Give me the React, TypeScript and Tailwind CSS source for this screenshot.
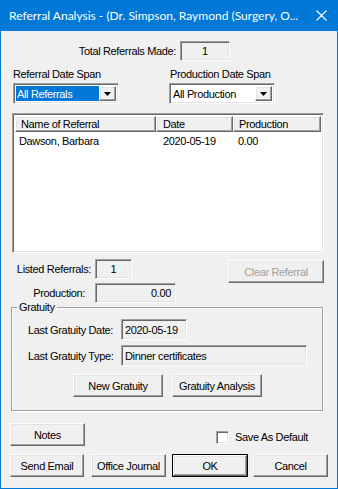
import React from "react";

const raised =
  "bg-[#f0f0f0] border border-t-white border-l-white border-r-[#696969] border-b-[#696969] shadow-[inset_-1px_-1px_0_#a0a0a0,inset_1px_1px_0_#e3e3e3]";
const sunken =
  "border border-t-[#a0a0a0] border-l-[#a0a0a0] border-r-white border-b-white shadow-[inset_1px_1px_0_#696969,inset_-1px_-1px_0_#e3e3e3]";

function Field({ className, children }: { className: string; children?: React.ReactNode }) {
  return <div className={`${sunken} bg-[#f0f0f0] flex items-center ${className}`}>{children}</div>;
}

function Button({ className, children, disabled }: { className: string; children: React.ReactNode; disabled?: boolean }) {
  return (
    <div className={`${raised} flex items-center justify-center h-[23px] ${disabled ? "text-[#a0a0a0]" : ""} ${className}`}>
      {children}
    </div>
  );
}

function Combo({ text, selected }: { text: string; selected?: boolean }) {
  return (
    <div className={`${sunken} bg-white flex items-center p-[2px] w-[106px] h-[21px]`}>
      <div className={`flex-1 h-full flex items-center pl-[1px] ${selected ? "bg-[#0078d7] text-white" : ""}`}>{text}</div>
      <div className={`${raised} w-[17px] h-full flex items-center justify-center`}>
        <svg width="7" height="4" viewBox="0 0 7 4">
          <path d="M0 0h7L3.5 4z" fill="black" />
        </svg>
      </div>
    </div>
  );
}

export default function App() {
  return (
    <div className="w-[338px] h-[489px] flex flex-col bg-[#0078d7] font-['Liberation_Sans',Arial,sans-serif] text-[11px] leading-[14px] tracking-[-0.35px] text-black">
      <div className="h-[31px] flex items-center pl-[9px] pr-[10px] text-white font-['Lato',sans-serif] text-[12px] tracking-normal">
        <span className="flex-1 whitespace-nowrap">Referral Analysis - (Dr. Simpson, Raymond (Surgery, O...</span>
        <svg width="11" height="11" viewBox="0 0 11 11" className="mr-[1px] shrink-0">
          <path d="M0.5 0.5l10 10M10.5 0.5l-10 10" stroke="white" strokeWidth="1.1" />
        </svg>
      </div>

      <div className="flex-1 bg-[#f0f0f0] mx-px mb-px flex flex-col">
        <div className="mt-[10px] flex items-center h-[20px]">
          <span className="w-[179px] text-right pr-[4px]">Total Referrals Made:</span>
          <Field className="w-[50px] h-[20px] justify-center">1</Field>
        </div>

        <div className="mt-[6px] flex pl-[12px] h-[14px]">
          <span className="w-[156px]">Referral Date Span</span>
          <span className="pl-[1px]">Production Date Span</span>
        </div>

        <div className="mt-[2px] flex pl-[12px]">
          <Combo text="All Referrals" selected />
          <div className="ml-[50px]">
            <Combo text="All Production" />
          </div>
        </div>

        <div className={`${sunken} mt-[9px] ml-[11px] w-[312px] h-[140px] bg-white p-[2px] flex flex-col`}>
          <div className="flex h-[16px]">
            <div className={`${raised} w-[141px] pl-[5px] flex items-center`}>Name of Referral</div>
            <div className={`${raised} w-[77px] pl-[6px] flex items-center`}>Date</div>
            <div className={`${raised} w-[88px] pl-[5px] flex items-center`}>Production</div>
          </div>
          <div className="flex h-[16px] items-center mt-[1px]">
            <span className="w-[141px] pl-[4px]">Dawson, Barbara</span>
            <span className="w-[77px] pl-[7px]">2020-05-19</span>
            <span className="pl-[5px]">0.00</span>
          </div>
        </div>

        <div className="mt-[6px] flex items-start h-[24px]">
          <span className="w-[94px] pr-[4px] text-right leading-[20px]">Listed Referrals:</span>
          <Field className="w-[37px] h-[20px] justify-center">1</Field>
          <Button className="ml-[96px] mt-[1px] w-[96px]" disabled>
            Clear Referral
          </Button>
        </div>

        <div className="flex items-center h-[20px]">
          <span className="w-[94px] pr-[10px] text-right">Production:</span>
          <Field className="w-[81px] h-[20px] justify-end pr-[4px]">0.00</Field>
        </div>

        <div className="relative mt-[4px] ml-[10px] w-[312px] h-[104px] border border-[#a0a0a0] shadow-[inset_1px_1px_0_white,1px_1px_0_white] pl-[16px] flex flex-col">
          <span className="absolute top-[-8px] left-[5px] px-[2px] bg-[#f0f0f0]">Gratuity</span>
          <div className="mt-[11px] flex items-center h-[21px]">
            <span className="w-[93px]">Last Gratuity Date:</span>
            <Field className="w-[66px] h-[21px] pl-[3px]">2020-05-19</Field>
          </div>
          <div className="mt-[5px] flex items-center h-[21px]">
            <span className="w-[93px]">Last Gratuity Type:</span>
            <Field className="w-[186px] h-[21px] pl-[3px]">Dinner certificates</Field>
          </div>
          <div className="mt-[8px] flex ml-[45px] gap-[9px]">
            <Button className="w-[90px]">New Gratuity</Button>
            <Button className="w-[90px]">Gratuity Analysis</Button>
          </div>
        </div>

        <div className="mt-[12px] flex items-start h-[23px]">
          <Button className="ml-[9px] w-[75px]">Notes</Button>
          <div className="ml-[131px] mt-[7px] flex items-center">
            <div className={`${sunken} bg-white w-[13px] h-[13px]`} />
            <span className="ml-[6px]">Save As Default</span>
          </div>
        </div>

        <div className="mt-[8px] flex">
          <Button className="ml-[9px] w-[74px]">Send Email</Button>
          <Button className="ml-[7px] w-[75px]">Office Journal</Button>
          <div className="ml-[6px] w-[76px] h-[23px] border border-black flex">
            <div className={`${raised} flex-1 flex items-center justify-center`}>OK</div>
          </div>
          <Button className="ml-[5px] w-[75px]">Cancel</Button>
        </div>
      </div>
    </div>
  );
}
